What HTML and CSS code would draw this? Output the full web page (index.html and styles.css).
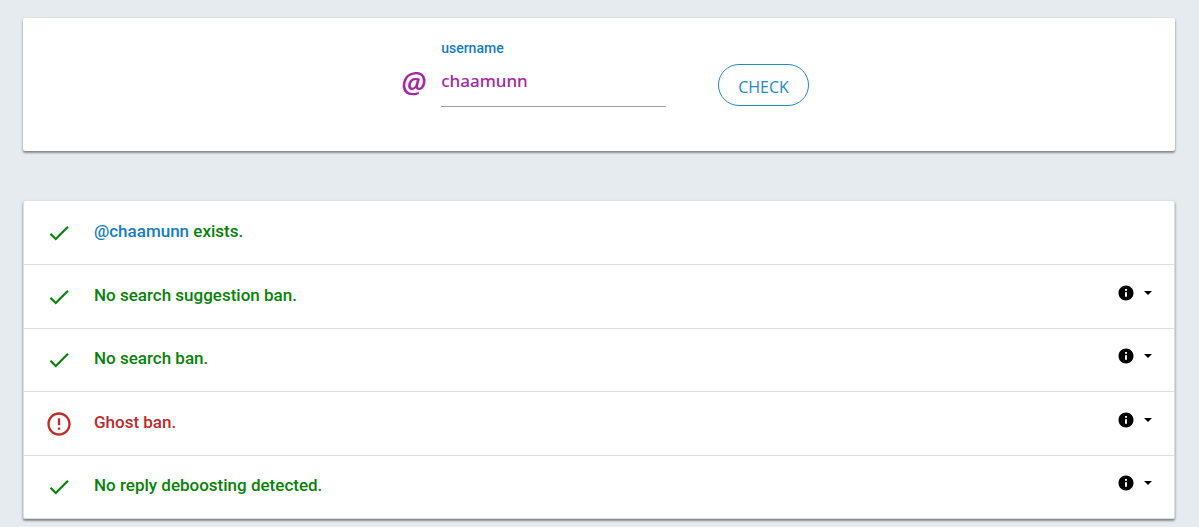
FILE: index.html
```html
<!DOCTYPE html>
<html lang="en">
<head>
<meta charset="utf-8">
<meta name="viewport" content="width=device-width, initial-scale=1">
<title>Username check</title>
<link rel="stylesheet" href="styles.css">
</head>
<body>
<svg class="defs" aria-hidden="true">
  <symbol id="check" viewBox="0 0 24 24"><path d="M9 16.17L4.83 12l-1.42 1.41L9 19 21 7l-1.41-1.41z"/></symbol>
  <symbol id="alert" viewBox="0 0 24 24"><path d="M11 15h2v2h-2zm0-8h2v6h-2zm.99-5C6.47 2 2 6.48 2 12s4.47 10 9.99 10C17.52 22 22 17.52 22 12S17.52 2 11.99 2zM12 20c-4.42 0-8-3.58-8-8s3.58-8 8-8 8 3.58 8 8-3.58 8-8 8z"/></symbol>
  <symbol id="info" viewBox="0 0 24 24"><path d="M12 2C6.48 2 2 6.48 2 12s4.48 10 10 10 10-4.48 10-10S17.52 2 12 2zm1.3 15h-2.6v-6h2.6zm0-8h-2.6V6.500h2.600z"/></symbol>
  <symbol id="caret" viewBox="0 0 8 4"><path d="M0 0h8L4 4z"/></symbol>
</svg>
<main class="page">
  <form class="card search">
    <span class="at" aria-hidden="true">@</span>
    <div class="field">
      <label class="field-label" for="username">username</label>
      <input class="field-input" id="username" type="text" value="chaamunn" autocomplete="off" spellcheck="false">
    </div>
    <button class="check-button" type="button">CHECK</button>
  </form>
  <ul class="card results">
    <li class="result ok">
      <svg class="status"><use href="#check"/></svg>
      <span class="message"><a class="profile" href="#">@chaamunn</a> exists.</span>
    </li>
    <li class="result ok">
      <svg class="status"><use href="#check"/></svg>
      <span class="message">No search suggestion ban.</span>
      <button class="details" type="button" aria-label="Details"><svg class="info"><use href="#info"/></svg><svg class="caret"><use href="#caret"/></svg></button>
    </li>
    <li class="result ok">
      <svg class="status"><use href="#check"/></svg>
      <span class="message">No search ban.</span>
      <button class="details" type="button" aria-label="Details"><svg class="info"><use href="#info"/></svg><svg class="caret"><use href="#caret"/></svg></button>
    </li>
    <li class="result bad">
      <svg class="status"><use href="#alert"/></svg>
      <span class="message">Ghost ban.</span>
      <button class="details" type="button" aria-label="Details"><svg class="info"><use href="#info"/></svg><svg class="caret"><use href="#caret"/></svg></button>
    </li>
    <li class="result ok">
      <svg class="status"><use href="#check"/></svg>
      <span class="message">No reply deboosting detected.</span>
      <button class="details" type="button" aria-label="Details"><svg class="info"><use href="#info"/></svg><svg class="caret"><use href="#caret"/></svg></button>
    </li>
  </ul>
</main>
</body>
</html>
```
FILE: styles.css
```css
* { box-sizing: border-box; }
body {
  margin: 0;
  background: #e5ebef;
  font-family: Roboto, sans-serif;
}
.defs { display: none; }
.page {
  display: flex;
  flex-direction: column;
  gap: 50px;
  padding: 18px 24px 6px 23px;
}
.card {
  margin: 0;
  background: #fff;
  border-radius: 2px;
  box-shadow: 0 2px 2px rgba(0, 0, 0, .3), 0 1px 3px rgba(0, 0, 0, .24);
}
.search {
  display: flex;
  justify-content: center;
  align-items: flex-start;
  padding: 22px 0 44px 12px;
}
.at {
  width: 40px;
  margin-top: 24px;
  color: #a626a4;
  font: italic 600 29px/36px "Open Sans", sans-serif;
}
.field { width: 225px; margin-right: 52px; }
.field-label {
  display: block;
  color: #137dc5;
  font-size: 14px;
  font-weight: 500;
  line-height: 16px;
}
.field-input {
  display: block;
  width: 100%;
  height: 51px;
  padding: 0 0 1px;
  border: 0;
  border-bottom: 1px solid #9e9e9e;
  outline: 0;
  background: transparent;
  color: #a626a4;
  font: 500 17px/24px "Noto Sans", "Open Sans", sans-serif;
}
.check-button {
  height: 42px;
  margin-top: 24px;
  padding: 3px 19px 0;
  border: 1px solid #2188c9;
  border-radius: 21px;
  background: #fff;
  color: #2188c9;
  font: 16px/24px "Open Sans", sans-serif;
}
.results {
  padding: 0;
  list-style: none;
  border: 1px solid #dcdfe0;
  border-top: 0;
}
.result {
  display: flex;
  align-items: center;
  min-height: 64px;
  padding: 0 22px;
}
.result:nth-child(odd) { min-height: 63px; }
.result + .result { border-top: 1px solid #dcdfe0; }
.ok { color: #078307; }
.bad { color: #c02a2a; }
.status {
  width: 26px;
  height: 28px;
  margin-right: 22px;
  fill: currentColor;
}
.bad .status { width: 28px; margin: 0 21px 0 -1px; }
.message {
  flex: 1;
  padding-bottom: 4px;
  font-size: 17px;
  font-weight: 500;
  line-height: 24px;
}
.profile { color: #137dc5; text-decoration: none; }
.details {
  display: flex;
  align-items: center;
  gap: 9px;
  padding: 0 0 8px;
  border: 0;
  background: transparent;
  color: #000;
}
.info { width: 18px; height: 18px; fill: currentColor; }
.caret { width: 8px; height: 4px; fill: currentColor; }
```
